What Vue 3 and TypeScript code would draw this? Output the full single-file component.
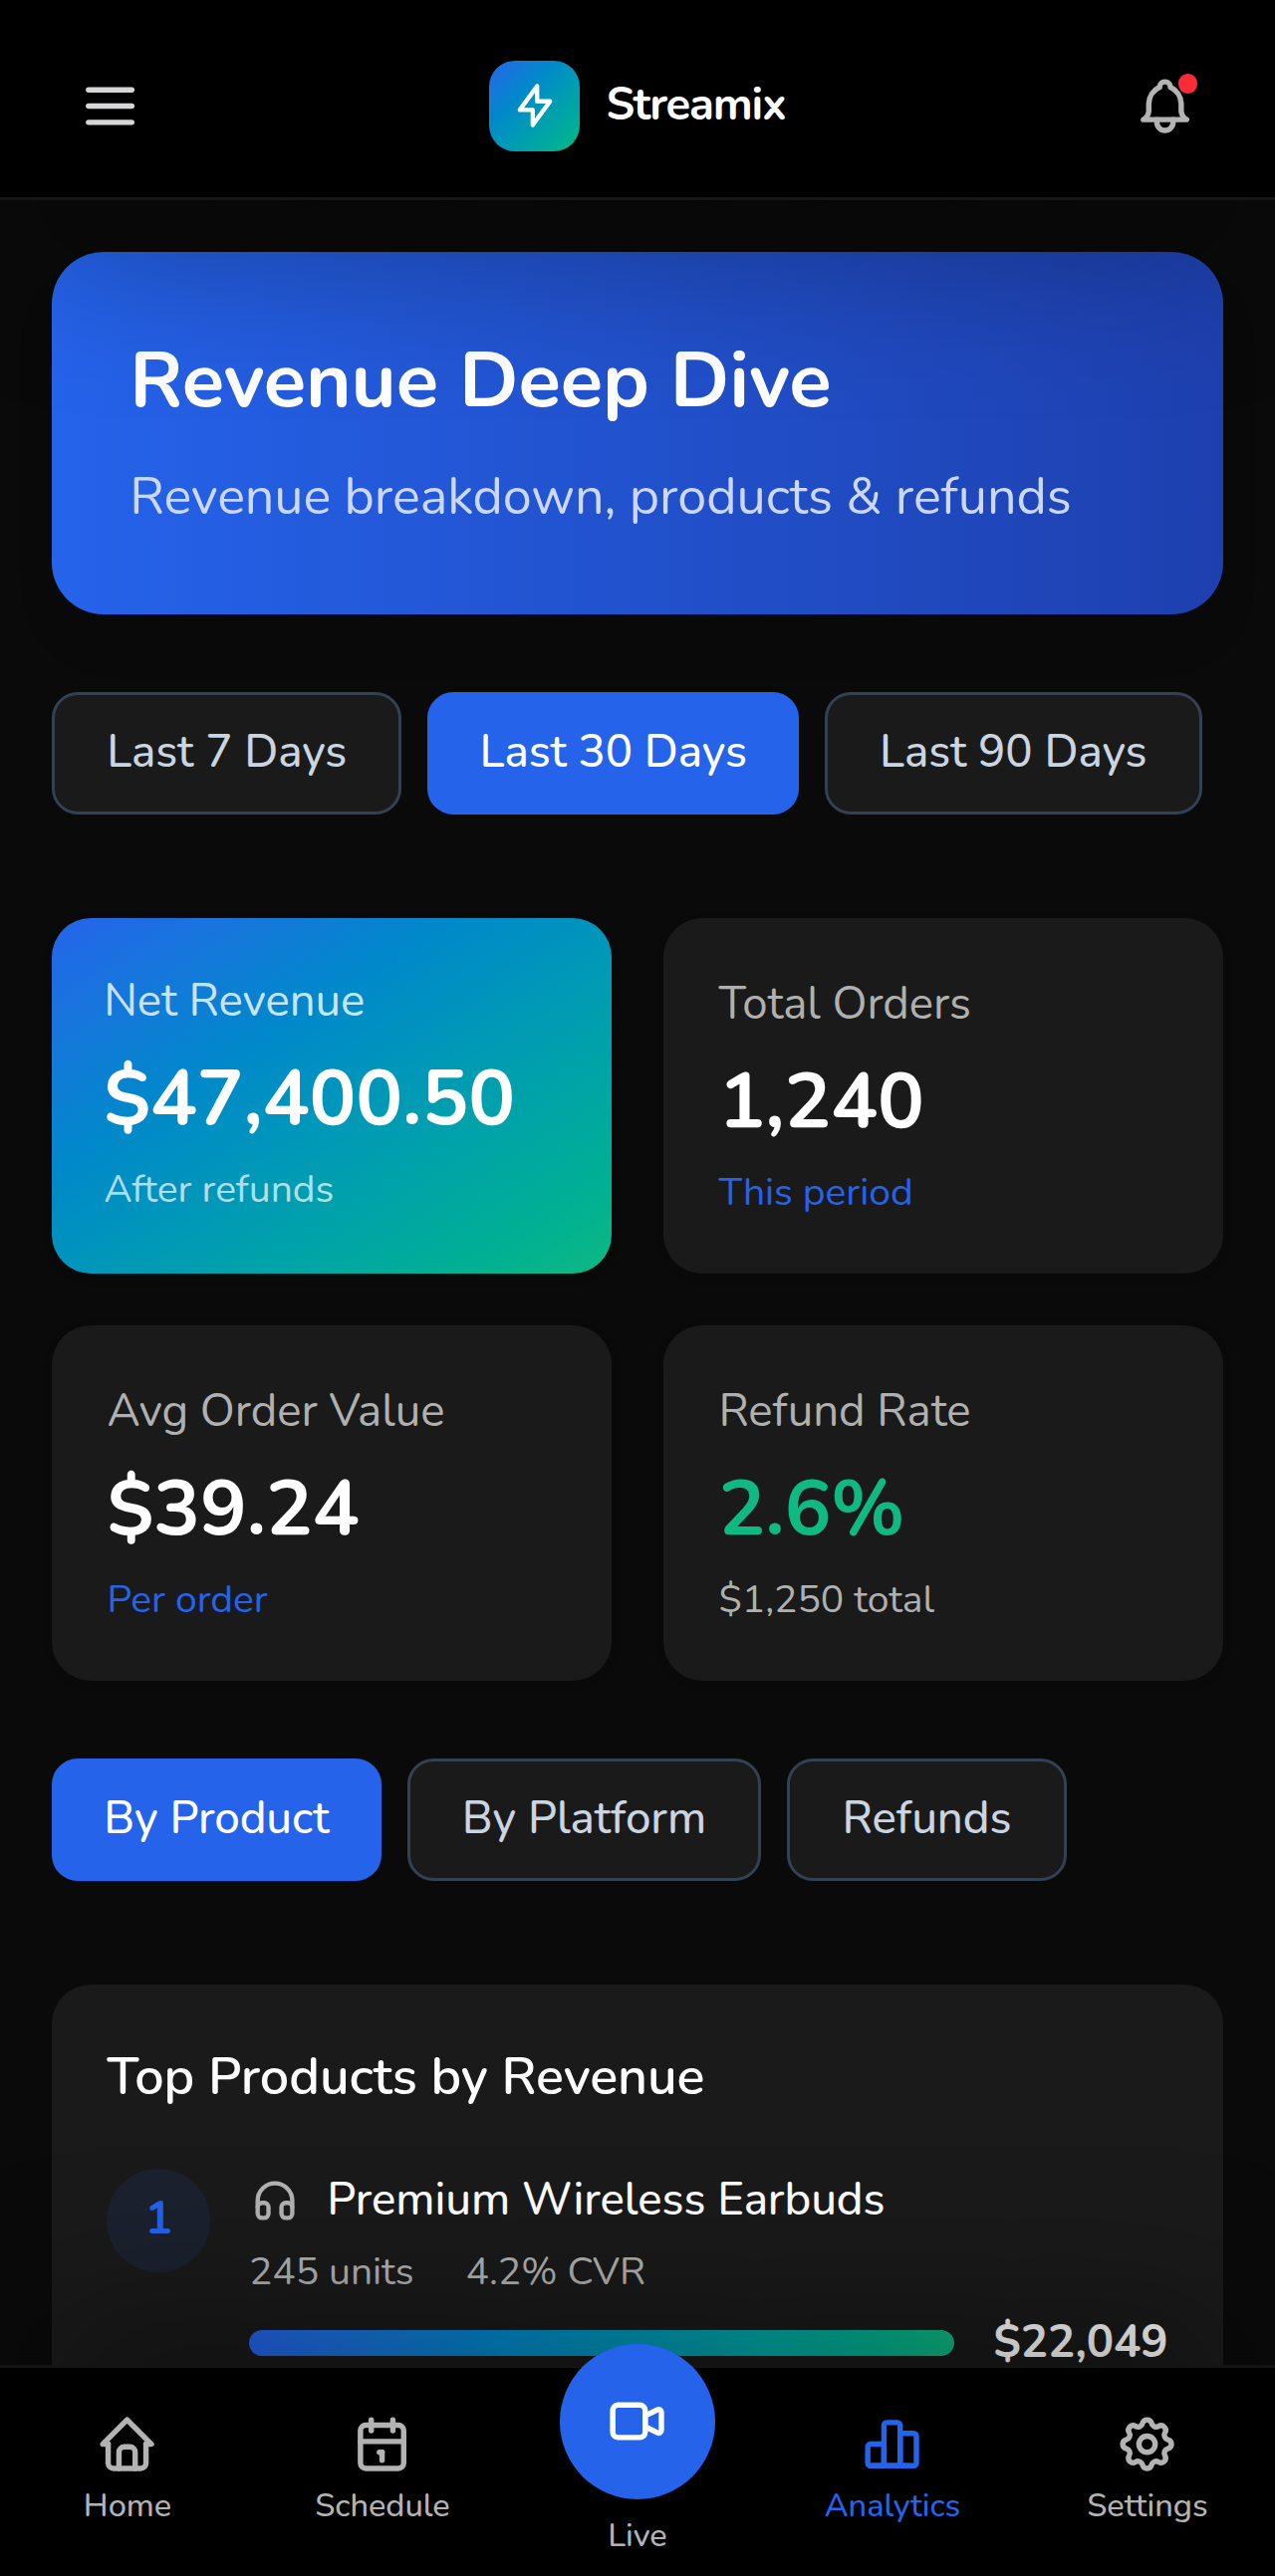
<script setup lang="ts">
import { ref } from 'vue'

interface Stat {
  label: string
  value: string
  note: string
  tone: 'featured' | 'plain' | 'success'
  noteTone: 'light' | 'accent' | 'muted'
}

interface NavItem {
  label: string
  paths: string[]
  live?: boolean
}

const periods = ['Last 7 Days', 'Last 30 Days', 'Last 90 Days']
const activePeriod = ref('Last 30 Days')

const tabs = ['By Product', 'By Platform', 'Refunds']
const activeTab = ref('By Product')

const stats: Stat[] = [
  { label: 'Net Revenue', value: '$47,400.50', note: 'After refunds', tone: 'featured', noteTone: 'light' },
  { label: 'Total Orders', value: '1,240', note: 'This period', tone: 'plain', noteTone: 'accent' },
  { label: 'Avg Order Value', value: '$39.24', note: 'Per order', tone: 'plain', noteTone: 'accent' },
  { label: 'Refund Rate', value: '2.6%', note: '$1,250 total', tone: 'success', noteTone: 'muted' },
]

const products = [
  { rank: 1, name: 'Premium Wireless Earbuds', units: '245 units', cvr: '4.2% CVR', share: 100, revenue: '$22,049' },
]

const activeNav = ref('Analytics')
const navItems: NavItem[] = [
  {
    label: 'Home',
    paths: [
      'M5 12H3l9-9 9 9h-2',
      'M5 12v7a2 2 0 0 0 2 2h10a2 2 0 0 0 2-2v-7',
      'M9 21v-6a2 2 0 0 1 2-2h2a2 2 0 0 1 2 2v6',
    ],
  },
  {
    label: 'Schedule',
    paths: [
      'M4 7a2 2 0 0 1 2-2h12a2 2 0 0 1 2 2v12a2 2 0 0 1-2 2H6a2 2 0 0 1-2-2z',
      'M16 3v4',
      'M8 3v4',
      'M4 11h16',
      'M11 15h1',
      'M12 15v3',
    ],
  },
  {
    label: 'Live',
    live: true,
    paths: [
      'M15 10l4.553-2.276A1 1 0 0 1 21 8.618v6.764a1 1 0 0 1-1.447.894L15 14z',
      'M3 8a2 2 0 0 1 2-2h8a2 2 0 0 1 2 2v8a2 2 0 0 1-2 2H5a2 2 0 0 1-2-2z',
    ],
  },
  {
    label: 'Analytics',
    paths: [
      'M3 13a1 1 0 0 1 1-1h4a1 1 0 0 1 1 1v6a1 1 0 0 1-1 1H4a1 1 0 0 1-1-1z',
      'M15 9a1 1 0 0 1 1-1h4a1 1 0 0 1 1 1v10a1 1 0 0 1-1 1h-4a1 1 0 0 1-1-1z',
      'M9 5a1 1 0 0 1 1-1h4a1 1 0 0 1 1 1v14a1 1 0 0 1-1 1h-4a1 1 0 0 1-1-1z',
      'M4 20h14',
    ],
  },
  {
    label: 'Settings',
    paths: [
      'M10.325 4.317c.426-1.756 2.924-1.756 3.35 0a1.724 1.724 0 0 0 2.573 1.066c1.543-.94 3.31.826 2.37 2.37a1.724 1.724 0 0 0 1.065 2.572c1.756.426 1.756 2.924 0 3.35a1.724 1.724 0 0 0-1.066 2.573c.94 1.543-.826 3.31-2.37 2.37a1.724 1.724 0 0 0-2.572 1.065c-.426 1.756-2.924 1.756-3.35 0a1.724 1.724 0 0 0-2.573-1.066c-1.543.94-3.31-.826-2.37-2.37a1.724 1.724 0 0 0-1.065-2.572c-1.756-.426-1.756-2.924 0-3.35a1.724 1.724 0 0 0 1.066-2.573c-.94-1.543.826-3.31 2.37-2.37c1 .608 2.296.07 2.572-1.065z',
      'M9 12a3 3 0 1 0 6 0a3 3 0 0 0-6 0',
    ],
  },
]
</script>

<template>
  <div class="app">
    <header class="topbar">
      <button class="icon-button" aria-label="Menu">
        <svg class="icon" viewBox="0 0 24 24"><path d="M4 6h16" /><path d="M4 12h16" /><path d="M4 18h16" /></svg>
      </button>
      <div class="brand">
        <span class="brand-mark">
          <svg class="icon small" viewBox="0 0 24 24"><path d="M13 3v7h6l-8 11v-7H5l8-11" /></svg>
        </span>
        <span class="brand-name">Streamix</span>
      </div>
      <button class="icon-button bell" aria-label="Notifications">
        <svg class="icon" viewBox="0 0 24 24">
          <path d="M10 5a2 2 0 1 1 4 0a7 7 0 0 1 4 6v3a4 4 0 0 0 2 3H4a4 4 0 0 0 2-3v-3a7 7 0 0 1 4-6" />
          <path d="M9 17v1a3 3 0 0 0 6 0v-1" />
        </svg>
        <span class="badge"></span>
      </button>
    </header>

    <main class="content">
      <section class="hero">
        <h1>Revenue Deep Dive</h1>
        <p>Revenue breakdown, products &amp; refunds</p>
      </section>

      <div class="pills">
        <button
          v-for="period in periods"
          :key="period"
          class="pill"
          :class="{ active: period === activePeriod }"
          @click="activePeriod = period"
        >{{ period }}</button>
      </div>

      <section class="stats">
        <article v-for="stat in stats" :key="stat.label" class="stat" :class="stat.tone">
          <div class="stat-label">{{ stat.label }}</div>
          <div class="stat-value">{{ stat.value }}</div>
          <div class="stat-note" :class="stat.noteTone">{{ stat.note }}</div>
        </article>
      </section>

      <div class="pills">
        <button
          v-for="tab in tabs"
          :key="tab"
          class="pill"
          :class="{ active: tab === activeTab }"
          @click="activeTab = tab"
        >{{ tab }}</button>
      </div>

      <section class="panel">
        <h2>Top Products by Revenue</h2>
        <div v-for="product in products" :key="product.rank" class="product">
          <div class="rank">{{ product.rank }}</div>
          <div class="product-body">
            <div class="product-title">
              <svg class="icon small" viewBox="0 0 24 24">
                <path d="M4 15a2 2 0 0 1 2-2h1a2 2 0 0 1 2 2v3a2 2 0 0 1-2 2H6a2 2 0 0 1-2-2z" />
                <path d="M15 15a2 2 0 0 1 2-2h1a2 2 0 0 1 2 2v3a2 2 0 0 1-2 2h-1a2 2 0 0 1-2-2z" />
                <path d="M4 15v-3a8 8 0 0 1 16 0v3" />
              </svg>
              <span>{{ product.name }}</span>
            </div>
            <div class="product-meta">
              <span>{{ product.units }}</span>
              <span>{{ product.cvr }}</span>
            </div>
            <div class="product-revenue">
              <div class="track"><div class="fill" :style="{ width: product.share + '%' }"></div></div>
              <strong>{{ product.revenue }}</strong>
            </div>
          </div>
        </div>
      </section>
    </main>

    <nav class="bottombar">
      <a
        v-for="item in navItems"
        :key="item.label"
        class="nav-item"
        :class="{ live: item.live, active: item.label === activeNav }"
        @click="activeNav = item.label"
      >
        <span class="nav-icon">
          <svg class="icon" viewBox="0 0 24 24"><path v-for="d in item.paths" :key="d" :d="d" /></svg>
        </span>
        <span class="nav-label">{{ item.label }}</span>
      </a>
    </nav>
  </div>
</template>

<style>
body {
  background: #0a0a0a;
}
</style>

<style scoped>
.app {
  display: flex;
  flex-direction: column;
  height: 100vh;
  overflow: hidden;
  box-sizing: border-box;
  background: #0a0a0a;
  color: #fff;
  font-family: Nunito, Lato, sans-serif;
  font-size: 45.6px;
}

.app * {
  box-sizing: border-box;
  letter-spacing: -0.0015em;
}

h1,
h2,
p {
  margin: 0;
}

button {
  border: 0;
  padding: 0;
  background: none;
  color: inherit;
  font: inherit;
}

.icon {
  display: block;
  flex: none;
  width: 65.14px;
  height: 65.14px;
  fill: none;
  stroke: currentColor;
  stroke-width: 2;
  stroke-linecap: round;
  stroke-linejoin: round;
}

.icon.small {
  width: 52.1px;
  height: 52.1px;
}

/* Header */
.topbar {
  position: relative;
  z-index: 2;
  flex: none;
  display: flex;
  align-items: center;
  justify-content: space-between;
  height: 201px;
  padding: 15px 52.1px 0;
  background: #000;
  border-bottom: 3px solid #161616;
  box-shadow: 0 81px 163px -39px rgba(0, 0, 0, 0.38);
}

.icon-button {
  position: relative;
  padding: 26.05px;
  color: #d6d6d8;
}

.icon-button.bell {
  color: #b3b3b3;
}

.badge {
  position: absolute;
  top: 26.5px;
  right: 25.5px;
  width: 19.6px;
  height: 19.6px;
  border-radius: 50%;
  background: #fb2c36;
}

.brand {
  display: flex;
  align-items: center;
  gap: 26.05px;
}

.brand-mark {
  display: grid;
  place-items: center;
  width: 91.2px;
  height: 91.2px;
  border-radius: 26px;
  background: linear-gradient(to bottom right in oklab, #2563eb, #10b981);
}

.app .brand-name {
  padding-bottom: 4px;
  font-weight: 700;
  letter-spacing: -0.026em;
}

/* Scrolling area */
.content {
  flex: 1;
  min-height: 0;
  display: flex;
  flex-direction: column;
  padding: 52px 52.1px 0;
}

.hero {
  flex: none;
  height: 363.8px;
  padding: 76.6px 78.2px 0;
  border-radius: 52.1px;
  background: linear-gradient(to right in oklab, #2563eb, #1e40af);
  box-shadow: 0 33px 49px -10px rgba(0, 0, 0, 0.1);
}

.hero h1 {
  font-size: 78.17px;
  font-weight: 700;
  line-height: 105px;
}

.hero p {
  margin-top: 25px;
  color: #cbd8fb;
  font-size: 52.11px;
  line-height: 78.8px;
}

.pills {
  flex: none;
  display: flex;
  gap: 26.05px;
  margin: 78.2px 0 104.2px;
}

.pill {
  height: 122.7px;
  padding: 0 52.1px 3.2px;
  border: 3px solid #334155;
  border-radius: 26.05px;
  background: #1a1a1a;
  color: #cbd5e1;
  font-weight: 500;
  white-space: nowrap;
}

.pill.active {
  border: 0;
  background: #2563eb;
  color: #fff;
}

.stats {
  flex: none;
  display: grid;
  grid-template-columns: 1fr 1fr;
  gap: 52.3px 52.1px;
}

.stat {
  height: 356.9px;
  padding: 54.2px 55.4px 0;
  border-radius: 39.1px;
  background: #1a1a1a;
  box-shadow: 0 3px 8px rgba(0, 0, 0, 0.15);
}

.stat.featured {
  padding: 50.9px 52.1px 0;
  background: linear-gradient(to bottom right in oklab, #2563eb, #10b981);
}

.stat-label {
  color: #b0b0b0;
  line-height: 65.6px;
}

.featured .stat-label {
  color: rgba(255, 255, 255, 0.8);
}

.stat-value {
  margin-top: 12.6px;
  font-size: 78.17px;
  font-weight: 700;
  line-height: 105px;
}

.success .stat-value {
  color: #10b981;
}

.stat-note {
  margin-top: 12px;
  font-size: 39.08px;
  line-height: 52.5px;
}

.stat-note.light {
  color: rgba(255, 255, 255, 0.7);
}

.stat-note.accent {
  color: #2563eb;
}

.stat-note.muted {
  color: #b0b0b0;
}

.panel {
  flex: none;
  height: 560px;
  padding: 54px 55.4px 0;
  border-radius: 39.1px;
  background: #1a1a1a;
}

.panel h2 {
  margin-bottom: 51.9px;
  font-size: 52.11px;
  font-weight: 600;
  line-height: 78.8px;
}

.product {
  display: flex;
  align-items: flex-start;
  gap: 38.6px;
}

.rank {
  flex: none;
  width: 103.8px;
  height: 104.3px;
  border-radius: 50%;
  background: #1b212e;
  color: #2563eb;
  font-weight: 700;
  line-height: 101px;
  text-align: center;
}

.product-body {
  flex: 1;
}

.product-title {
  display: flex;
  align-items: center;
  gap: 26.3px;
  height: 64.3px;
  color: #b3b3b3;
}

.product-title span {
  padding-bottom: 2.4px;
  color: #fff;
  font-weight: 500;
}

.product-meta {
  display: flex;
  gap: 52.1px;
  margin-top: 13.1px;
  color: #b0b0b0;
  font-size: 39.08px;
  line-height: 52.5px;
}

.product-revenue {
  display: flex;
  align-items: center;
  gap: 39.1px;
  height: 65.6px;
  margin-top: 12.5px;
}

.track {
  flex: 1;
  height: 26.1px;
  border-radius: 13.1px;
  background: #334155;
  overflow: hidden;
}

.fill {
  height: 100%;
  border-radius: 13.1px;
  background: linear-gradient(to right in oklab, #2563eb, #10b981);
}

.product-revenue strong {
  padding-bottom: 2px;
  font-weight: 700;
}

/* Bottom navigation */
.bottombar {
  position: relative;
  z-index: 2;
  flex: none;
  display: flex;
  height: 212px;
  border-top: 3px solid #131414;
  background: #000;
  box-shadow: 0 -81px 163px -39px rgba(0, 0, 0, 0.45);
}

.nav-item {
  flex: 1;
  display: flex;
  flex-direction: column;
  align-items: center;
  padding-top: 43.9px;
  color: #b3b3b3;
}

.nav-item.active {
  color: #2563eb;
}

.nav-label {
  margin-top: 4.5px;
  font-size: 32.57px;
  font-weight: 500;
  line-height: 49px;
}

.nav-item.live {
  padding-top: 0;
}

.live .nav-icon {
  display: grid;
  place-items: center;
  width: 156.3px;
  height: 156.3px;
  margin-top: -24.3px;
  border-radius: 50%;
  background: #2563eb;
  color: #fff;
}

.live .nav-label {
  margin-top: 11.5px;
}
</style>
